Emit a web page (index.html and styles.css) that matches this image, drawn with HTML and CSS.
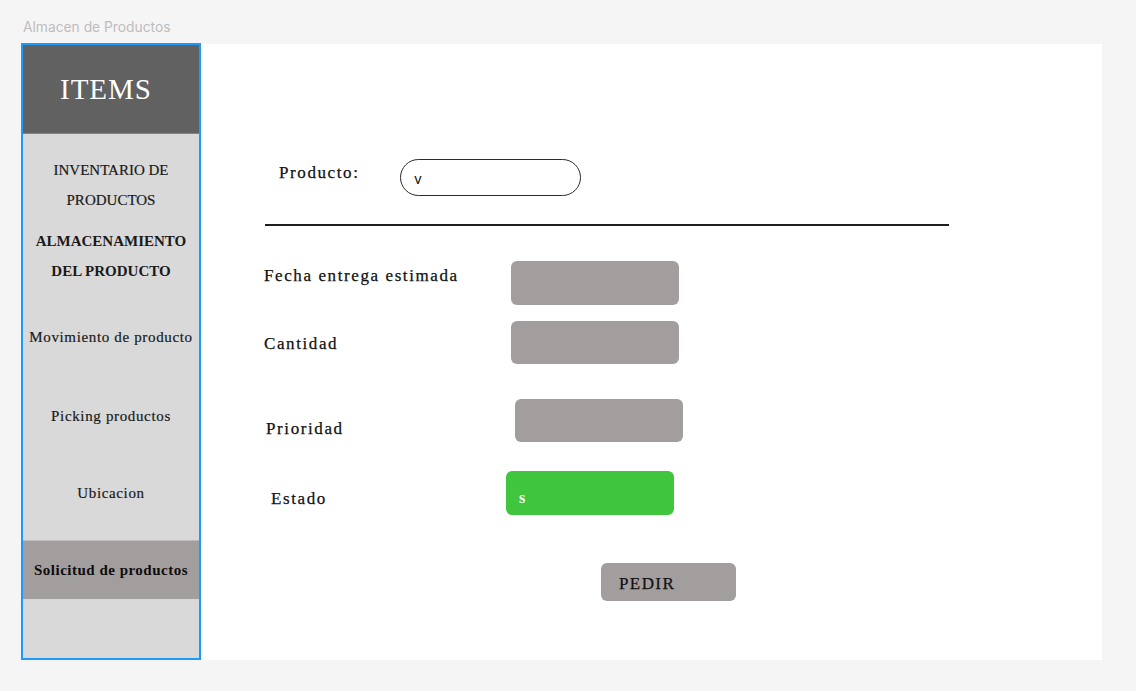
FILE: index.html
```html
<!DOCTYPE html>
<html lang="es">
<head>
<meta charset="utf-8">
<title>Almacen de Productos</title>
<link rel="stylesheet" href="styles.css">
</head>
<body>
<div class="frame-title">Almacen de Productos</div>
<div class="frame">
  <aside class="sidebar">
    <div class="sidebar-head">ITEMS</div>
    <nav class="nav">
      <div class="nav-item upper first">INVENTARIO DE<br>PRODUCTOS</div>
      <div class="nav-item upper bold second">ALMACENAMIENTO<br>DEL PRODUCTO</div>
      <div class="nav-item mov">Movimiento de producto</div>
      <div class="nav-item pick">Picking productos</div>
      <div class="nav-item ubi">Ubicacion</div>
      <div class="nav-item active">Solicitud de productos</div>
    </nav>
  </aside>
  <main class="main">
    <div class="row row-producto">
      <div class="label label-producto">Producto:</div>
      <div class="pill-input">v</div>
    </div>
    <div class="divider"></div>
    <div class="row row-fecha">
      <div class="label label-fecha">Fecha entrega estimada</div>
      <div class="box box-fecha"></div>
    </div>
    <div class="row row-cantidad">
      <div class="label label-cantidad">Cantidad</div>
      <div class="box box-cantidad"></div>
    </div>
    <div class="row row-prioridad">
      <div class="label label-prioridad">Prioridad</div>
      <div class="box box-prioridad"></div>
    </div>
    <div class="row row-estado">
      <div class="label label-estado">Estado</div>
      <div class="box box-estado"><span class="estado-val">s</span></div>
    </div>
    <div class="btn-pedir">PEDIR</div>
  </main>
</div>
</body>
</html>
```

FILE: styles.css
```css
html, body {
  margin: 0;
  padding: 0;
}
body {
  background: #f5f5f5;
  width: 1136px;
  height: 691px;
  overflow: hidden;
  font-family: "Liberation Serif", "Times New Roman", serif;
  color: #111;
}
.frame-title {
  height: 44px;
  box-sizing: border-box;
  padding: 18px 0 0 23px;
  font-family: Inter, "Liberation Sans", sans-serif;
  font-size: 13.8px;
  line-height: 18px;
  color: #bdbdbd;
}
.frame {
  margin-left: 22px;
  width: 1080px;
  height: 616px;
  background: #ffffff;
  display: flex;
}
.sidebar {
  margin-left: -1px;
  margin-top: -1px;
  width: 180px;
  height: 617px;
  box-sizing: border-box;
  border: 2px solid #1d9bfd;
  background: #d9d9d9;
  display: flex;
  flex-direction: column;
  flex-shrink: 0;
}
.sidebar-head {
  height: 89px;
  background: #616161;
  border-bottom: 1px solid #838383;
  color: #ffffff;
  font-size: 29px;
  letter-spacing: 1px;
  display: flex;
  align-items: center;
  justify-content: center;
  padding: 1px 10px 0 0;
  box-sizing: border-box;
}
.nav {
  display: flex;
  flex-direction: column;
}
.nav-item {
  text-align: center;
  font-size: 15px;
  line-height: 30px;
  letter-spacing: 0.65px;
  color: #1a1a1a;
  -webkit-text-stroke: 0.2px #1a1a1a;
}
.nav-item.upper {
  letter-spacing: 0;
}
.nav-item.bold {
  font-weight: bold;
  -webkit-text-stroke: 0;
}
.nav-item.first {
  margin-top: 21px;
}
.nav-item.second {
  margin-top: 11px;
}
.nav-item.mov {
  margin-top: 36px;
}
.nav-item.pick {
  margin-top: 49px;
}
.nav-item.ubi {
  margin-top: 47px;
}
.nav-item.active {
  margin-top: 32px;
  height: 59px;
  box-sizing: border-box;
  border-top: 1px solid #bcbcbc;
  background: #a39e9e;
  font-weight: bold;
  letter-spacing: 0.5px;
  color: #0d0d0d;
  -webkit-text-stroke: 0;
  display: flex;
  align-items: center;
  justify-content: center;
  padding-bottom: 1px;
}
.main {
  flex: 1;
  display: flex;
  flex-direction: column;
  align-items: flex-start;
  padding-top: 115px;
}
.row {
  display: flex;
  align-items: flex-start;
}
.label {
  font-size: 17px;
  line-height: 20px;
  letter-spacing: 1.6px;
  color: #111;
  -webkit-text-stroke: 0.25px #111;
}
.row-producto {
  margin-left: 78px;
}
.label-producto {
  width: 121px;
  margin-top: 4px;
}
.pill-input {
  width: 181px;
  height: 37px;
  box-sizing: border-box;
  border: 1px solid #2a2a2a;
  border-radius: 19px;
  padding: 2px 0 0 13px;
  display: flex;
  align-items: center;
  font-family: Inter, "Liberation Sans", sans-serif;
  font-size: 14px;
  color: #111;
}
.divider {
  margin-top: 28px;
  margin-left: 64px;
  width: 684px;
  height: 2px;
  background: #1e1e1e;
}
.box {
  width: 168px;
  border-radius: 6px;
  background: #a39e9e;
}
.row-fecha {
  margin-top: 35px;
  margin-left: 63px;
}
.label-fecha {
  width: 247px;
  margin-top: 5px;
}
.box-fecha {
  height: 44px;
}
.row-cantidad {
  margin-top: 16px;
  margin-left: 63px;
}
.label-cantidad {
  width: 247px;
  margin-top: 13px;
}
.box-cantidad {
  height: 43px;
}
.row-prioridad {
  margin-top: 35px;
  margin-left: 65px;
}
.label-prioridad {
  width: 249px;
  margin-top: 20px;
}
.box-prioridad {
  height: 43px;
}
.row-estado {
  margin-top: 29px;
  margin-left: 70px;
}
.label-estado {
  width: 235px;
  margin-top: 18px;
}
.box-estado {
  height: 44px;
  background: #3fc63e;
  box-sizing: border-box;
  padding: 9px 0 0 13px;
  display: flex;
  align-items: center;
}
.estado-val {
  color: #ffffff;
  font-size: 16px;
  font-weight: bold;
}
.btn-pedir {
  margin-top: 48px;
  margin-left: 400px;
  width: 135px;
  height: 38px;
  box-sizing: border-box;
  border-radius: 6px;
  background: #a39e9e;
  padding: 3px 0 0 18px;
  display: flex;
  align-items: center;
  font-size: 17px;
  letter-spacing: 1.4px;
  color: #111;
  -webkit-text-stroke: 0.25px #111;
}
```
